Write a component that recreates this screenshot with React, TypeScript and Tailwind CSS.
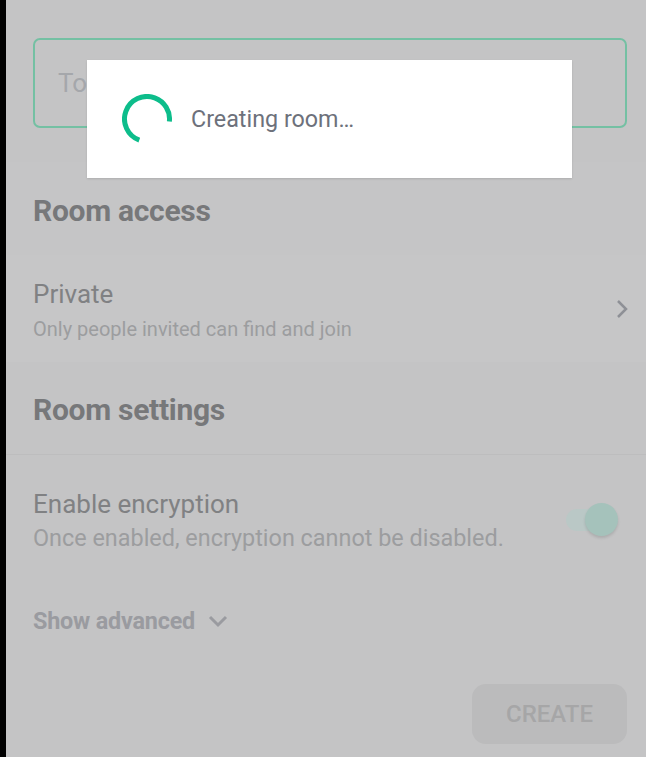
import React from "react"

function Spinner() {
  return (
    <svg width="50" height="50" viewBox="0 0 50 50" className="shrink-0">
      <circle
        cx="25"
        cy="25"
        r="22.5"
        fill="none"
        stroke="#0dbd8b"
        strokeWidth="5"
        strokeDasharray="100 141.4"
        transform="rotate(110 25 25)"
      />
    </svg>
  )
}

export default function App() {
  return (
    <div className="flex h-[757px] w-[646px] overflow-hidden font-['Roboto',sans-serif]">
      <div className="w-[6px] shrink-0 bg-black" />

      <div className="relative flex flex-1 flex-col bg-[#c4c4c5]">
        <div className="pl-[27px] pr-[19px] pt-[38px] pb-[34px]">
          <div className="flex h-[90px] items-center rounded-[7px] border-2 border-[#74c0a3] px-[23px] text-[26px] text-[#a5a7ab]">
            To
          </div>
        </div>

        <div className="flex h-[93px] items-center bg-[#c5c5c6] px-[27px] pt-[3px] text-[30px] font-bold tracking-[-0.3px] text-[#77787a]">
          Room access
        </div>

        <div className="flex h-[107px] items-center justify-between bg-[#c6c6c7] pl-[27px] pr-[18px]">
          <div className="flex flex-col pt-[3px]">
            <span className="text-[26px] leading-[30px] text-[#808183]">Private</span>
            <span className="mt-[8px] text-[20px] leading-[24px] text-[#9c9d9f]">
              Only people invited can find and join
            </span>
          </div>
          <svg width="12" height="20" viewBox="0 0 12 20">
            <path d="M2 2 L10 10 L2 18" fill="none" stroke="#8e9096" strokeWidth="2.5" />
          </svg>
        </div>

        <div className="flex h-[93px] items-center border-b border-[#bdbdbe] px-[27px] pt-[2px] text-[30px] font-bold tracking-[-0.3px] text-[#77787a]">
          Room settings
        </div>

        <div className="flex items-center justify-between pl-[27px] pr-[28px] pt-[34px]">
          <div className="flex flex-col">
            <span className="text-[26px] leading-[30px] text-[#808183]">Enable encryption</span>
            <span className="mt-[5px] text-[23.4px] leading-[28px] text-[#9c9d9f]">
              Once enabled, encryption cannot be disabled.
            </span>
          </div>
          <div className="relative mt-[-1px] flex h-[24px] w-[52px] items-center">
            <div className="h-[22px] w-[42px] rounded-full bg-[#bac8c6]" />
            <div className="absolute right-0 top-[-5px] h-[33px] w-[33px] rounded-full bg-[#a5c2bb] shadow-[0_2px_3px_rgba(0,0,0,0.12)]" />
          </div>
        </div>

        <div className="flex items-center gap-[13px] px-[27px] pt-[52px]">
          <span className="text-[23.4px] font-bold tracking-[-0.2px] text-[#9a9ba0]">Show advanced</span>
          <svg width="20" height="13" viewBox="0 0 20 13">
            <path d="M2 2 L10 10 L18 2" fill="none" stroke="#9a9ba0" strokeWidth="3" />
          </svg>
        </div>

        <div className="flex justify-end pr-[19px] pt-[45px]">
          <div className="flex h-[60px] w-[155px] items-center justify-center rounded-[14px] bg-[#bbbbbc] text-[24px] font-medium text-[#a6a6a7]">
            CREATE
          </div>
        </div>

        <div className="absolute left-[81px] top-[60px] flex h-[118px] w-[485px] items-center gap-[19px] bg-white pl-[35px] shadow-[0_1px_2px_rgba(0,0,0,0.12)]">
          <Spinner />
          <span className="text-[23.3px] text-[#6d717b]">Creating room…</span>
        </div>
      </div>
    </div>
  )
}
